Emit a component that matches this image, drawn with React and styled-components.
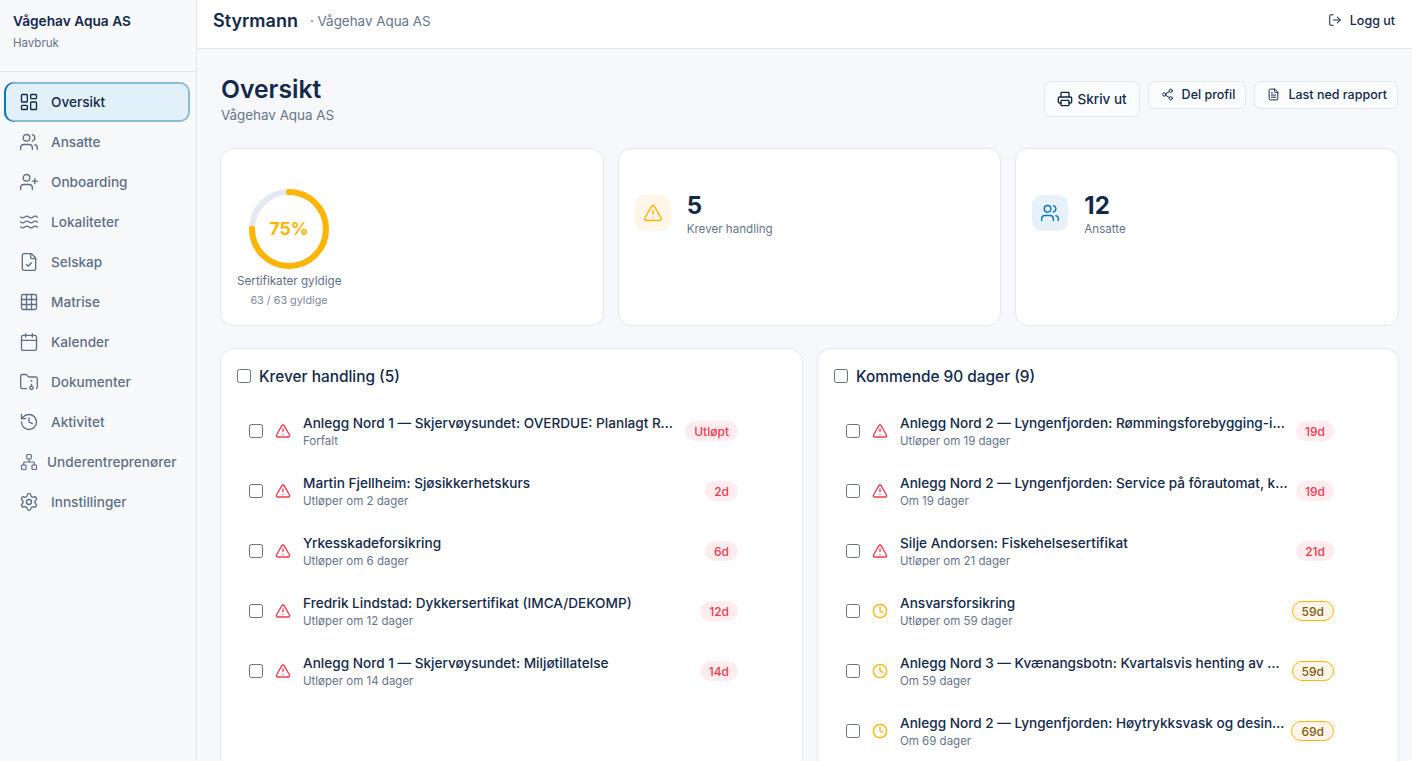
import React from 'react';
import styled, { createGlobalStyle } from 'styled-components';
import {
  LayoutDashboard,
  Users,
  UserPlus,
  Waves,
  FileCheck,
  Grid3x3,
  Calendar,
  FolderArchive,
  History,
  Network,
  Settings,
  LogOut,
  Printer,
  Share2,
  FileText,
  TriangleAlert,
  Clock,
} from 'lucide-react';

const navItems = [
  { label: 'Oversikt', icon: LayoutDashboard, active: true },
  { label: 'Ansatte', icon: Users },
  { label: 'Onboarding', icon: UserPlus },
  { label: 'Lokaliteter', icon: Waves },
  { label: 'Selskap', icon: FileCheck },
  { label: 'Matrise', icon: Grid3x3 },
  { label: 'Kalender', icon: Calendar },
  { label: 'Dokumenter', icon: FolderArchive },
  { label: 'Aktivitet', icon: History },
  { label: 'Underentreprenører', icon: Network, small: true },
  { label: 'Innstillinger', icon: Settings },
];

const actionItems = [
  { title: 'Anlegg Nord 1 — Skjervøysundet: OVERDUE: Planlagt Rengjøring av nøter', sub: 'Forfalt', badge: 'Utløpt' },
  { title: 'Martin Fjellheim: Sjøsikkerhetskurs', sub: 'Utløper om 2 dager', badge: '2d' },
  { title: 'Yrkesskadeforsikring', sub: 'Utløper om 6 dager', badge: '6d' },
  { title: 'Fredrik Lindstad: Dykkersertifikat (IMCA/DEKOMP)', sub: 'Utløper om 12 dager', badge: '12d' },
  { title: 'Anlegg Nord 1 — Skjervøysundet: Miljøtillatelse', sub: 'Utløper om 14 dager', badge: '14d' },
];

const upcomingItems = [
  { title: 'Anlegg Nord 2 — Lyngenfjorden: Rømmingsforebygging-inspeksjon', sub: 'Utløper om 19 dager', badge: '19d' },
  { title: 'Anlegg Nord 2 — Lyngenfjorden: Service på fôrautomat, kamera og lys', sub: 'Om 19 dager', badge: '19d' },
  { title: 'Silje Andorsen: Fiskehelsesertifikat', sub: 'Utløper om 21 dager', badge: '21d' },
  { title: 'Ansvarsforsikring', sub: 'Utløper om 59 dager', badge: '59d', warn: true },
  { title: 'Anlegg Nord 3 — Kvænangsbotn: Kvartalsvis henting av slam og avfall', sub: 'Om 59 dager', badge: '59d', warn: true },
  { title: 'Anlegg Nord 2 — Lyngenfjorden: Høytrykksvask og desinfeksjon', sub: 'Om 69 dager', badge: '69d', warn: true },
];

const Ring = () => (
  <svg width="84" height="84" viewBox="0 0 84 84">
    <circle cx="42" cy="42" r="37" fill="none" stroke="#e4e8f0" strokeWidth="6" />
    <circle
      cx="42"
      cy="42"
      r="37"
      fill="none"
      stroke="#ffb400"
      strokeWidth="6"
      strokeLinecap="round"
      strokeDasharray={`${2 * Math.PI * 37 * 0.75} ${2 * Math.PI * 37}`}
      transform="rotate(-90 42 42)"
    />
  </svg>
);

const ListRow = ({ item }) => {
  const Icon = item.warn ? Clock : TriangleAlert;
  return (
    <Row>
      <Check />
      <RowIcon $warn={item.warn}>
        <Icon size={16} strokeWidth={2} />
      </RowIcon>
      <RowText>
        <RowTitle>{item.title}</RowTitle>
        <RowSub>{item.sub}</RowSub>
      </RowText>
      <Badge $warn={item.warn}>{item.badge}</Badge>
    </Row>
  );
};

const App = () => {
  return (
    <Shell>
      <GlobalStyle />
      <Sidebar>
        <Brand>
          <BrandName>Vågehav Aqua AS</BrandName>
          <BrandSub>Havbruk</BrandSub>
        </Brand>
        <Nav>
          {navItems.map(({ label, icon: Icon, active, small }) => (
            <NavItem key={label} $active={active} $small={small}>
              <Icon size={small ? 18 : 20} strokeWidth={1.6} />
              {label}
            </NavItem>
          ))}
        </Nav>
      </Sidebar>
      <Page>
        <TopBar>
          <TopLeft>
            <AppName>Styrmann</AppName>
            <TopCompany>· Vågehav Aqua AS</TopCompany>
          </TopLeft>
          <Logout>
            <LogOut size={14} strokeWidth={1.8} />
            Logg ut
          </Logout>
        </TopBar>
        <Content>
          <TitleRow>
            <div>
              <Title>Oversikt</Title>
              <Subtitle>Vågehav Aqua AS</Subtitle>
            </div>
            <Actions>
              <PrintButton>
                <Printer size={16} strokeWidth={2} />
                Skriv ut
              </PrintButton>
              <SmallButton>
                <Share2 size={13} strokeWidth={1.8} />
                Del profil
              </SmallButton>
              <SmallButton>
                <FileText size={13} strokeWidth={1.8} />
                Last ned rapport
              </SmallButton>
            </Actions>
          </TitleRow>

          <Stats>
            <RingCard>
              <RingWrap>
                <Ring />
                <RingValue>75%</RingValue>
              </RingWrap>
              <RingLabel>Sertifikater gyldige</RingLabel>
              <RingSub>63 / 63 gyldige</RingSub>
            </RingCard>
            <StatCard>
              <StatIcon $tone="warn">
                <TriangleAlert size={20} strokeWidth={1.7} />
              </StatIcon>
              <div>
                <StatValue>5</StatValue>
                <StatLabel>Krever handling</StatLabel>
              </div>
            </StatCard>
            <StatCard>
              <StatIcon $tone="info">
                <Users size={20} strokeWidth={1.7} />
              </StatIcon>
              <div>
                <StatValue>12</StatValue>
                <StatLabel>Ansatte</StatLabel>
              </div>
            </StatCard>
          </Stats>

          <Panels>
            <Panel>
              <PanelHead>
                <Check />
                Krever handling (5)
              </PanelHead>
              {actionItems.map(item => (
                <ListRow key={item.title} item={item} />
              ))}
            </Panel>
            <Panel>
              <PanelHead>
                <Check />
                Kommende 90 dager (9)
              </PanelHead>
              {upcomingItems.map(item => (
                <ListRow key={item.title} item={item} />
              ))}
            </Panel>
          </Panels>
        </Content>
      </Page>
    </Shell>
  );
};

const GlobalStyle = createGlobalStyle`
  html, body {
    margin: 0;
    height: 100%;
    overflow: hidden;
    font-family: Inter, "Liberation Sans", sans-serif;
    background: #f7f8fb;
    color: #13294b;
  }

  * {
    box-sizing: border-box;
  }
`;

const Shell = styled.div`
  display: flex;
  width: 1412px;
  height: 761px;
  overflow: hidden;
`;

const Sidebar = styled.aside`
  flex: 0 0 197px;
  background: #f8f9fb;
  border-right: 1px solid #e3e7ef;
`;

const Brand = styled.div`
  height: 72px;
  padding: 13px 13px 0;
  border-bottom: 1px solid #e3e7ef;
`;

const BrandName = styled.div`
  font-size: 13.7px;
  font-weight: 600;
  line-height: 17px;
  color: #13294b;
`;

const BrandSub = styled.div`
  margin-top: 5px;
  font-size: 11.5px;
  line-height: 16px;
  color: #66748a;
`;

const Nav = styled.nav`
  display: flex;
  flex-direction: column;
  padding: 10px 6px 0 4px;
`;

const NavItem = styled.div`
  display: flex;
  align-items: center;
  gap: ${props => (props.$small ? '9px' : '12px')};
  height: 40px;
  padding-left: ${props => (props.$small ? '16px' : '15px')};
  font-size: 13.6px;
  font-weight: 500;
  color: ${props => (props.$active ? '#13294b' : '#5f6f87')};
  white-space: nowrap;
  border-radius: 10px;
  background: ${props => (props.$active ? '#e2f0fa' : 'transparent')};
  box-shadow: ${props =>
    props.$active ? 'inset 2px 0 0 #0a78bd, inset 0 0 0 2px #8dbbdc' : 'none'};

  svg {
    flex: none;
    color: ${props => (props.$active ? '#13294b' : '#5f6f87')};
  }
`;

const Page = styled.div`
  flex: 1;
  min-width: 0;
  display: flex;
  flex-direction: column;
`;

const TopBar = styled.header`
  flex: none;
  height: 49px;
  display: flex;
  align-items: center;
  justify-content: space-between;
  padding: 0 17px 7px 16px;
  background: #fff;
  border-bottom: 1px solid #e3e7ef;
`;

const TopLeft = styled.div`
  display: flex;
  align-items: center;
  gap: 12px;
`;

const AppName = styled.div`
  font-size: 18px;
  font-weight: 600;
  color: #13294b;
`;

const TopCompany = styled.div`
  font-size: 13.4px;
  color: #66748a;
`;

const Logout = styled.div`
  display: flex;
  align-items: center;
  gap: 8px;
  margin-bottom: 1px;
  font-size: 12.5px;
  font-weight: 500;
  color: #13294b;
`;

const Content = styled.main`
  flex: 1;
  min-height: 0;
  padding: 25px 13px 0 24px;
`;

const TitleRow = styled.div`
  display: flex;
  justify-content: space-between;
  align-items: flex-start;
  height: 74px;
`;

const Title = styled.h1`
  margin: 0;
  font-size: 24.7px;
  font-weight: 600;
  line-height: 30px;
  color: #13294b;
`;

const Subtitle = styled.div`
  margin-top: 2px;
  font-size: 13.4px;
  line-height: 18px;
  color: #66748a;
`;

const Actions = styled.div`
  display: flex;
  align-items: flex-start;
  gap: 8px;
  padding: 7px 1px 0 0;
`;

const PrintButton = styled.div`
  display: flex;
  align-items: center;
  gap: 4px;
  height: 36px;
  padding: 0 12px;
  font-size: 13.5px;
  font-weight: 500;
  background: #fbfcfd;
  border: 1px solid #e3e7ef;
  border-radius: 7px;
`;

const SmallButton = styled.div`
  display: flex;
  align-items: center;
  gap: 8px;
  height: 28px;
  padding: 0 10px 1px 12px;
  font-size: 12.5px;
  font-weight: 500;
  background: #fbfcfd;
  border: 1px solid #e3e7ef;
  border-radius: 7px;
`;

const Stats = styled.section`
  display: grid;
  grid-template-columns: repeat(3, 1fr);
  gap: 14px;
  margin-left: -1px;
`;

const Card = styled.div`
  background: #fff;
  border: 1px solid #e3e7ef;
  border-radius: 13px;
`;

const RingCard = styled(Card)`
  height: 178px;
  display: flex;
  flex-direction: column;
  align-items: flex-start;
  padding: 38px 0 0 16px;
`;

const RingWrap = styled.div`
  position: relative;
  width: 84px;
  height: 84px;
  margin-left: 10px;
`;

const RingValue = styled.div`
  position: absolute;
  inset: 0 0 2px;
  display: flex;
  align-items: center;
  justify-content: center;
  font-size: 17.5px;
  font-weight: 700;
  color: #ffb400;
`;

const RingLabel = styled.div`
  margin-top: 2px;
  font-size: 11.7px;
  line-height: 16px;
  color: #5f6f87;
`;

const RingSub = styled.div`
  align-self: stretch;
  width: 104px;
  margin-top: 4px;
  font-size: 10.8px;
  line-height: 16px;
  text-align: center;
  color: #7d8aa0;
`;

const StatCard = styled(Card)`
  height: 178px;
  display: flex;
  align-items: flex-start;
  gap: 16px;
  padding: 38px 16px 0;
`;

const StatIcon = styled.div`
  flex: none;
  width: 36px;
  height: 36px;
  margin-top: 8px;
  display: flex;
  align-items: center;
  justify-content: center;
  border-radius: 10px;
  background: ${props => (props.$tone === 'warn' ? '#fff6e9' : '#e6f1f9')};
  color: ${props => (props.$tone === 'warn' ? '#ffb400' : '#0a78bd')};
`;

const StatValue = styled.div`
  margin-top: 3px;
  font-size: 24px;
  font-weight: 700;
  line-height: 32px;
  color: #13294b;
`;

const StatLabel = styled.div`
  margin-top: -1px;
  font-size: 11.6px;
  line-height: 16px;
  color: #66748a;
`;

const Panels = styled.section`
  display: grid;
  grid-template-columns: 583px 582px;
  gap: 14px;
  margin-top: 22px;
  margin-left: -1px;
`;

const Panel = styled(Card)`
  height: 460px;
  padding: 16px 64px 0 16px;
`;

const PanelHead = styled.div`
  display: flex;
  align-items: center;
  gap: 8px;
  height: 22px;
  margin-bottom: 14px;
  font-size: 15.4px;
  font-weight: 500;
  color: #13294b;
`;

const Check = styled.span`
  flex: none;
  width: 14px;
  height: 14px;
  background: #fff;
  border: 1px solid #6b7280;
  border-radius: 2.5px;
`;

const Row = styled.div`
  display: flex;
  align-items: center;
  height: 60px;
  padding-left: 12px;
`;

const RowIcon = styled.span`
  flex: none;
  display: flex;
  margin: 0 12px;
  color: ${props => (props.$warn ? '#ffb400' : '#f4394f')};
`;

const RowText = styled.div`
  flex: 1;
  min-width: 0;
`;

const RowTitle = styled.div`
  font-size: 13.6px;
  font-weight: 500;
  line-height: 18px;
  color: #13294b;
  white-space: nowrap;
  overflow: hidden;
  text-overflow: ellipsis;
`;

const RowSub = styled.div`
  margin-top: 1px;
  font-size: 11.5px;
  line-height: 16px;
  color: #66748a;
`;

const Badge = styled.span`
  flex: none;
  margin-left: 7px;
  height: 20px;
  padding: 0 9px;
  display: flex;
  align-items: center;
  font-size: 12px;
  font-weight: 500;
  border-radius: 10px;
  background: ${props => (props.$warn ? '#fff6e9' : '#ffecee')};
  color: ${props => (props.$warn ? '#7d5c12' : '#f4394f')};
  border: ${props => (props.$warn ? '1px solid #ffb400' : 'none')};
`;

export default App;
